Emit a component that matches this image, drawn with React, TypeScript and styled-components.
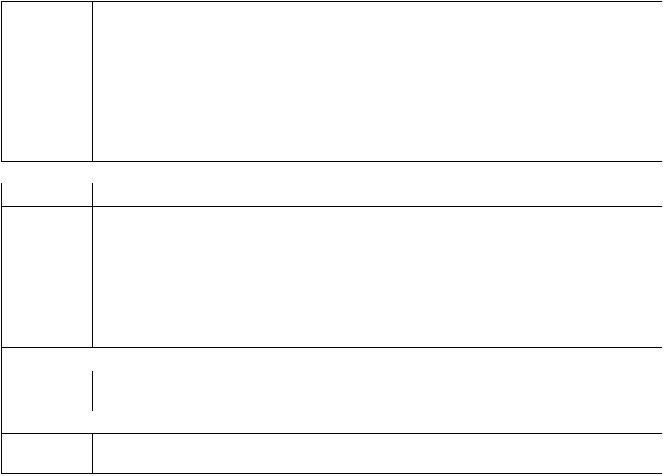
import styled, { createGlobalStyle } from 'styled-components'

const Global = createGlobalStyle`
  html, body {
    margin: 0;
    padding: 0;
    background: #fff;
    font-family: 'Liberation Sans', Arial, sans-serif;
  }
`

const Sheet = styled.div`
  display: flex;
  flex-direction: column;
  width: 661px;
  padding: 1px 0 0 1px;
`

const Block = styled.section<{ h: number; top?: boolean; gapBefore?: number }>`
  display: flex;
  height: ${({ h }) => h}px;
  margin-top: ${({ gapBefore }) => gapBefore ?? 0}px;
  border-left: 1px solid #000;
  border-bottom: 1px solid #000;
  border-top: ${({ top }) => (top ? '1px solid #000' : '0')};
`

const Label = styled.div<{ short?: number }>`
  flex: 0 0 90px;
  border-right: 1px solid #000;
  align-self: ${({ short }) => (short ? 'center' : 'stretch')};
  height: ${({ short }) => (short ? `${short}px` : 'auto')};
`

const Field = styled.div`
  flex: 1;
`

export default function App() {
  return (
    <>
      <Global />
      <Sheet>
        <Block h={159} top>
          <Label />
          <Field />
        </Block>
        <Block h={23} gapBefore={21}>
          <Label />
          <Field />
        </Block>
        <Block h={140}>
          <Label />
          <Field />
        </Block>
        <Block h={85}>
          <Label short={40} />
          <Field />
        </Block>
        <Block h={39}>
          <Label />
          <Field />
        </Block>
      </Sheet>
    </>
  )
}
